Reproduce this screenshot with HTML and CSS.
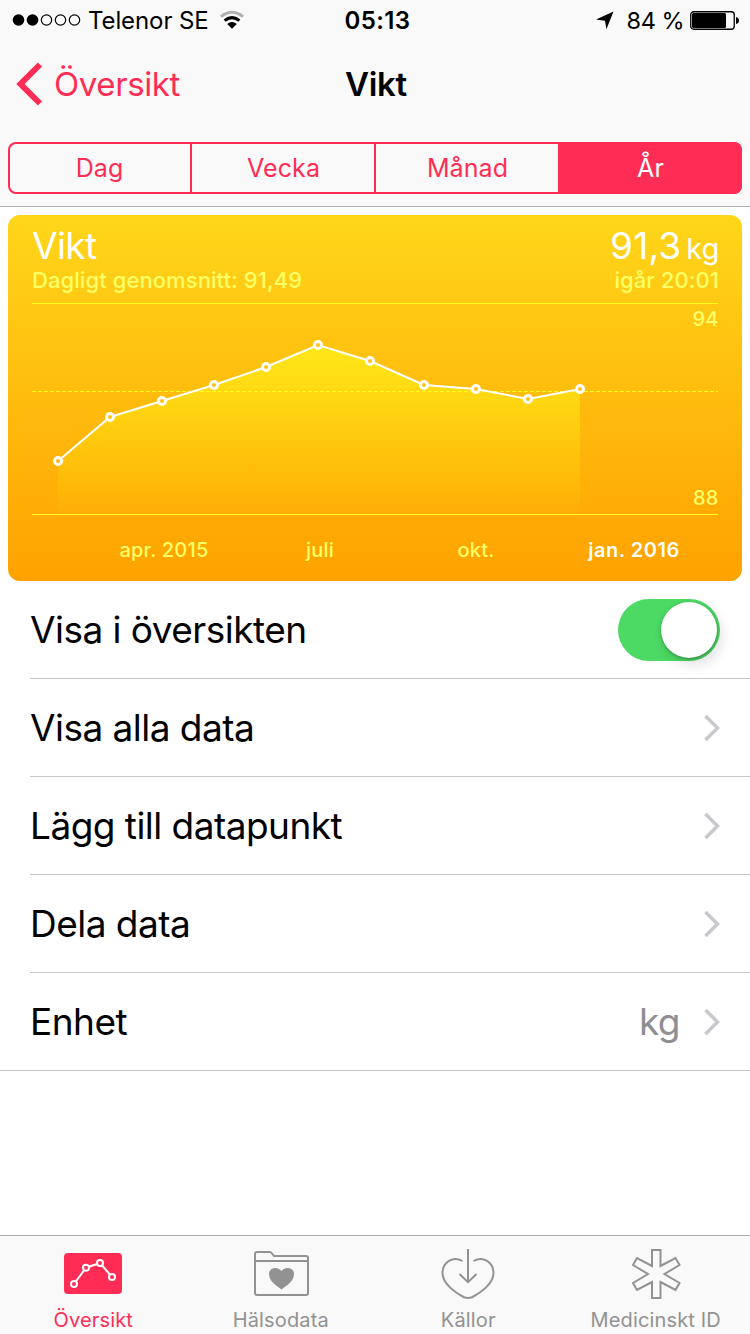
FILE: index.html
```html
<!DOCTYPE html>
<html lang="sv">
<head>
    <meta charset="UTF-8">
    <meta name="viewport" content="width=device-width, initial-scale=1.0">
    <title>Vikt</title>
    <link rel="stylesheet" href="styles.css">
</head>
<body>
    <header class="header">
        <div class="status-bar">
            <div class="status-left">
                <svg class="signal" width="70" height="14" viewBox="0 0 70 14">
                    <circle cx="6.5" cy="7" r="5.8"/>
                    <circle cx="20.5" cy="7" r="5.8"/>
                    <circle class="off" cx="34.5" cy="7" r="5.2"/>
                    <circle class="off" cx="48.5" cy="7" r="5.2"/>
                    <circle class="off" cx="62.5" cy="7" r="5.2"/>
                </svg>
                <span class="carrier">Telenor SE</span>
                <svg class="wifi" width="26" height="20" viewBox="0 0 26 20">
                    <path class="arc weak" d="M2 6.600 Q13 -2 24 6.600"/>
                    <path class="arc" d="M5.600 10.600 Q13 4.600 20.400 10.600"/>
                    <path d="M8.200 13.900 Q13 10 17.800 13.900 L13 18.800 Z"/>
                </svg>
            </div>
            <span class="clock">05:13</span>
            <div class="status-right">
                <svg class="location" width="20" height="20" viewBox="0 0 20 20">
                    <path d="M18.500 1.500 L11.400 19.200 L10 10.800 L1 9.400 Z"/>
                </svg>
                <span class="percent">84 %</span>
                <svg class="battery" width="50" height="20" viewBox="0 0 50 20">
                    <rect class="shell" x="0.75" y="1.75" width="43.5" height="17.5" rx="3"/>
                    <rect x="2" y="3" width="34" height="15" rx="1.5"/>
                    <path d="M46 7 Q49 7.500 49 10.500 Q49 13.500 46 14 Z"/>
                </svg>
            </div>
        </div>
        <nav class="nav-bar">
            <a class="back">
                <svg width="28" height="44" viewBox="0 0 28 44">
                    <path d="M25 2.500 L5.500 22 L25 41.500"/>
                </svg>
                <span>Översikt</span>
            </a>
            <h1 class="title">Vikt</h1>
        </nav>
        <div class="segments">
            <button class="segment">Dag</button>
            <button class="segment">Vecka</button>
            <button class="segment">Månad</button>
            <button class="segment selected">År</button>
        </div>
    </header>

    <main class="content">
        <section class="card">
            <div class="card-top">
                <span class="card-name">Vikt</span>
                <span class="card-value">91,3<small>kg</small></span>
            </div>
            <div class="card-sub">
                <span>Dagligt genomsnitt: 91,49</span>
                <span class="card-time">igår 20:01</span>
            </div>
            <svg class="chart" width="734" height="278" viewBox="8 303 734 278">
                <defs>
                    <linearGradient id="area" gradientUnits="userSpaceOnUse" x1="0" y1="345" x2="0" y2="514">
                        <stop offset="0" stop-color="#ffec1a" stop-opacity="0.9"/>
                        <stop offset="1" stop-color="#ffdc0a" stop-opacity="0.04"/>
                    </linearGradient>
                </defs>
                <path class="rule" d="M32 303.500 H718"/>
                <path class="fill" d="M58 461 L110 417 L162 401 L214 385 L266 367 L318 345 L370 361 L424 385 L476 389 L528 399 L580 389 V514 H58 Z"/>
                <path class="rule dashed" d="M32 391.500 H718"/>
                <path class="rule" d="M32 514.500 H718"/>
                <path class="line" d="M58 461 L110 417 L162 401 L214 385 L266 367 L318 345 L370 361 L424 385 L476 389 L528 399 L580 389"/>
                <g class="points">
                    <circle cx="58" cy="461" r="3.5"/>
                    <circle cx="110" cy="417" r="3.5"/>
                    <circle cx="162" cy="401" r="3.5"/>
                    <circle cx="214" cy="385" r="3.5"/>
                    <circle cx="266" cy="367" r="3.5"/>
                    <circle cx="318" cy="345" r="3.5"/>
                    <circle cx="370" cy="361" r="3.5"/>
                    <circle cx="424" cy="385" r="3.5"/>
                    <circle cx="476" cy="389" r="3.5"/>
                    <circle cx="528" cy="399" r="3.5"/>
                    <circle cx="580" cy="389" r="3.5"/>
                </g>
                <text class="label end" x="718.5" y="326">94</text>
                <text class="label end" x="718.5" y="505">88</text>
                <text class="label" x="164" y="557">apr. 2015</text>
                <text class="label" x="320" y="557">juli</text>
                <text class="label" x="476" y="557">okt.</text>
                <text class="label current" x="634" y="557">jan. 2016</text>
            </svg>
        </section>

        <ul class="list">
            <li class="row">
                <span class="row-text">Visa i översikten</span>
                <span class="switch"><span class="knob"></span></span>
            </li>
            <li class="row">
                <span class="row-text">Visa alla data</span>
                <svg class="chevron" width="18" height="28" viewBox="0 0 18 28"><path d="M2.500 2 L14.500 14 L2.500 26"/></svg>
            </li>
            <li class="row">
                <span class="row-text">Lägg till datapunkt</span>
                <svg class="chevron" width="18" height="28" viewBox="0 0 18 28"><path d="M2.500 2 L14.500 14 L2.500 26"/></svg>
            </li>
            <li class="row">
                <span class="row-text">Dela data</span>
                <svg class="chevron" width="18" height="28" viewBox="0 0 18 28"><path d="M2.500 2 L14.500 14 L2.500 26"/></svg>
            </li>
            <li class="row">
                <span class="row-text">Enhet</span>
                <span class="row-value">kg</span>
                <svg class="chevron" width="18" height="28" viewBox="0 0 18 28"><path d="M2.500 2 L14.500 14 L2.500 26"/></svg>
            </li>
        </ul>
    </main>

    <footer class="tab-bar">
        <a class="tab active">
            <svg width="60" height="52" viewBox="0 0 60 52">
                <rect class="tile" x="1" y="5" width="58" height="41" rx="4"/>
                <path class="graph" d="M11 36 L23 19.700 L37 15 L49 29"/>
                <circle cx="11" cy="36" r="3"/>
                <circle cx="23" cy="19.7" r="3"/>
                <circle cx="37" cy="15" r="3"/>
                <circle cx="49" cy="29" r="3"/>
            </svg>
            <span>Översikt</span>
        </a>
        <a class="tab">
            <svg width="60" height="52" viewBox="0 0 60 52">
                <path d="M4 45 V6 Q4 4 6 4 H18.500 Q20 4 21 5.500 L23 8 H55 Q57 8 57 10 V45 Q57 47 55 47 H6 Q4 47 4 45 M4 13 H57"/>
                <path class="solid" d="M30.500 41.500 C26.500 38.500 18 33.500 18 26 C18 19 27 18 30.500 23 C34 18 43 19 43 26 C43 33.500 34.500 38.500 30.500 41.500 Z"/>
            </svg>
            <span>Hälsodata</span>
        </a>
        <a class="tab">
            <svg width="60" height="52" viewBox="0 0 60 52">
                <path d="M24.500 13 C15 7.500 4.500 14 4.500 25 C4.500 36 18 45 25.500 49 Q30 51 34.500 49 C42 45 55.500 36 55.500 25 C55.500 14 45 7.500 35.500 13"/>
                <path d="M30 1 V34 M21.500 26 L30 34.200 L38.500 26"/>
            </svg>
            <span>Källor</span>
        </a>
        <a class="tab">
            <svg width="60" height="52" viewBox="0 0 60 52">
                <path d="M26 2 H34.500 V18 L49.500 10 L53.500 17 L38.500 26 L53.500 35 L49.500 42 L34.500 34 V50 H26 V34 L11 42 L7 35 L22 26 L7 17 L11 10 L26 18 Z"/>
            </svg>
            <span>Medicinskt ID</span>
        </a>
    </footer>
</body>
</html>
```

FILE: styles.css
```css
* {
    box-sizing: border-box;
}
body {
    margin: 0;
    width: 750px;
    height: 1334px;
    display: flex;
    flex-direction: column;
    background: #fff;
    color: #000;
    font-family: Inter, "Liberation Sans", sans-serif;
    overflow: hidden;
}
svg {
    display: block;
    flex: none;
}

/* header */
.header {
    height: 207px;
    background: #f9f9f9;
    border-bottom: 1px solid #b2b2b2;
}
.status-bar {
    display: grid;
    grid-template-columns: 1fr auto 1fr;
    align-items: center;
    height: 40px;
    padding: 0 12px;
    font-size: 24px;
}
.status-left, .status-right {
    display: flex;
    align-items: center;
}
.status-right {
    justify-content: flex-end;
}
.signal .off {
    fill: none;
    stroke: #000;
    stroke-width: 1.2;
}
.carrier {
    margin-left: 6px;
    letter-spacing: -0.1px;
}
.wifi {
    margin-left: 10px;
}
.wifi .arc {
    fill: none;
    stroke: #000;
    stroke-width: 3;
}
.wifi .weak {
    stroke: #b0b0b0;
}
.clock {
    margin-left: 5px;
    font-weight: 600;
    letter-spacing: 0.4px;
}
.location {
    margin-right: 12px;
}
.percent {
    font-size: 23.5px;
    letter-spacing: -0.5px;
}
.battery {
    margin: 0 -2px 0 6px;
}
.battery .shell {
    fill: none;
    stroke: #000;
    stroke-width: 1.3;
}
.nav-bar {
    display: grid;
    grid-template-columns: 1fr auto 1fr;
    align-items: center;
    height: 88px;
    padding: 0 13px 0 15px;
    font-size: 33px;
}
.back {
    display: flex;
    align-items: center;
    gap: 11px;
    color: #ff2d55;
    letter-spacing: -0.4px;
}
.back path {
    fill: none;
    stroke: #ff2d55;
    stroke-width: 6;
}
.title {
    margin: 0;
    font-size: 33px;
    font-weight: 600;
    letter-spacing: -0.3px;
}
.segments {
    display: grid;
    grid-template-columns: 184px 184px 182px 184px;
    height: 52px;
    margin: 14px 8px 0;
    border-radius: 8px;
    box-shadow: inset 0 0 0 2px #ff2d55;
    overflow: hidden;
}
.segment {
    padding: 0 0 0 1px;
    border: none;
    border-right: 2px solid #ff2d55;
    background: none;
    color: #ff2d55;
    font-family: inherit;
    font-size: 25px;
    letter-spacing: 0.1px;
}
.segment:nth-child(3) {
    border-right: none;
}
.segment.selected {
    border: none;
    background: #ff2d55;
    color: #fff;
}

/* weight card */
.content {
    flex: 1;
    padding-top: 8px;
}
.card {
    height: 366px;
    margin: 0 8px;
    border-radius: 12px;
    background: linear-gradient(#ffd61a, #ffa200);
    overflow: hidden;
}
.card-top, .card-sub {
    display: flex;
    justify-content: space-between;
    align-items: baseline;
    padding: 0 23px 0 24px;
}
.card-top {
    height: 51px;
    padding-top: 8px;
    color: #fff;
    font-size: 37px;
    line-height: 46px;
}
.card-name {
    letter-spacing: -0.6px;
}
.card-value {
    letter-spacing: 0.2px;
}
.card-value small {
    margin-left: 5px;
    font-size: 29px;
    letter-spacing: -0.2px;
}
.card-sub {
    height: 37px;
    color: #ffff66;
    font-size: 22px;
    font-weight: 500;
    letter-spacing: 0.08px;
    line-height: 28px;
}
.rule {
    stroke: #ffff1e;
    stroke-width: 1;
}
.dashed {
    stroke-dasharray: 4 2;
}
.fill {
    fill: url(#area);
}
.line {
    fill: none;
    stroke: #fff;
    stroke-width: 2;
}
.points circle {
    fill: #ffc00f;
    stroke: #fff;
    stroke-width: 3;
}
.label {
    fill: #ffff66;
    font-size: 20px;
    font-weight: 500;
    letter-spacing: 0.2px;
    text-anchor: middle;
}
.label.end {
    text-anchor: end;
}
.label.current {
    fill: #fff;
    font-weight: 600;
    letter-spacing: 0.5px;
}

/* settings list */
.list {
    margin: 0;
    padding: 0;
    list-style: none;
    border-bottom: 1px solid #c8c7cc;
}
.row {
    display: flex;
    align-items: center;
    height: 98px;
    margin-left: 30px;
    padding-right: 30px;
    border-bottom: 1px solid #c8c7cc;
    font-size: 37px;
    letter-spacing: -0.53px;
}
.row:last-child {
    height: 97px;
    border-bottom: none;
}
.row-text {
    flex: 1;
}
.row-value {
    margin-right: 23px;
    color: #8e8e93;
}
.chevron {
    margin-right: -1px;
}
.chevron path {
    fill: none;
    stroke: #c7c7cc;
    stroke-width: 3.5;
}
.switch {
    display: flex;
    justify-content: flex-end;
    width: 102px;
    height: 62px;
    padding: 3px;
    border-radius: 31px;
    background: #4cd964;
}
.knob {
    width: 56px;
    height: 56px;
    border-radius: 50%;
    background: #fff;
    box-shadow: 0 1px 3px rgba(0, 0, 0, 0.3), 4px 6px 14px rgba(0, 0, 0, 0.14);
}

/* tabs */
.tab-bar {
    display: grid;
    grid-template-columns: repeat(4, 1fr);
    height: 99px;
    background: #f9f9f9;
    border-top: 1px solid #b2b2b2;
}
.tab {
    display: flex;
    flex-direction: column;
    align-items: center;
    padding: 12px 1px 0 0;
    color: #929292;
    font-size: 20px;
    letter-spacing: 0.15px;
    line-height: 24px;
}
.tab span {
    margin-top: 8px;
}
.tab path {
    fill: none;
    stroke: #929292;
    stroke-width: 2;
}
.tab .solid {
    fill: #929292;
    stroke: none;
}
.tab.active {
    color: #ff2d55;
}
.tab .tile {
    fill: #ff2d55;
}
.tab .graph {
    stroke: #fff;
}
.tab circle {
    fill: #ff2d55;
    stroke: #fff;
    stroke-width: 2;
}
```
